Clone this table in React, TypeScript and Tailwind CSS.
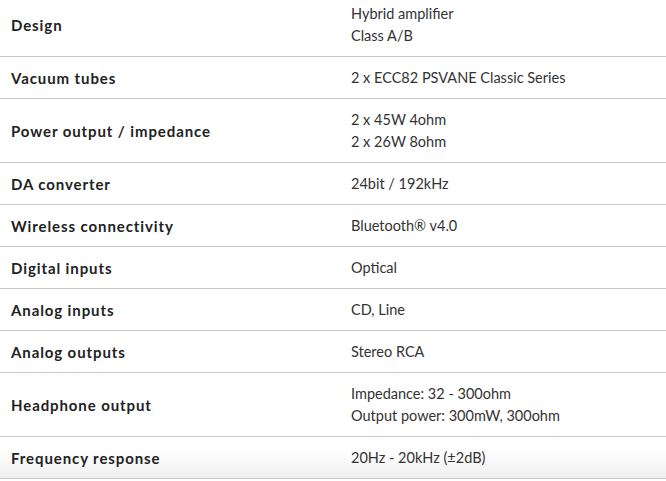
// Spec sheet table: label column on the left, values on the right.

const SPECS: { label: string; values: string[] }[] = [
  { label: "Design", values: ["Hybrid amplifier", "Class A/B"] },
  { label: "Vacuum tubes", values: ["2 x ECC82 PSVANE Classic Series"] },
  { label: "Power output / impedance", values: ["2 x 45W 4ohm", "2 x 26W 8ohm"] },
  { label: "DA converter", values: ["24bit / 192kHz"] },
  { label: "Wireless connectivity", values: ["Bluetooth® v4.0"] },
  { label: "Digital inputs", values: ["Optical"] },
  { label: "Analog inputs", values: ["CD, Line"] },
  { label: "Analog outputs", values: ["Stereo RCA"] },
  {
    label: "Headphone output",
    values: ["Impedance: 32 - 300ohm", "Output power: 300mW, 300ohm"],
  },
  { label: "Frequency response", values: ["20Hz - 20kHz (±2dB)"] },
];

export default function App() {
  return (
    <div className="w-[666px] h-[481px] overflow-hidden bg-white font-['Lato',sans-serif]">
      <div className="-mt-[7px]">
        {SPECS.map((spec, i) => (
          <div
            key={spec.label}
            className={`flex items-center border-b border-[#c6c6c6] py-[9.5px] ${
              i === SPECS.length - 1 ? "bg-gradient-to-b from-white from-30% to-[#f0f0f0]" : ""
            }`}
          >
            <div className="w-[340px] shrink-0 pl-[11px] text-[15px] leading-[22px] font-bold tracking-[0.06em] text-[#222]">
              {spec.label}
            </div>
            <div className="pl-[11px] text-[14.5px] leading-[22px] text-[#333]">
              {spec.values.map((v) => (
                <div key={v}>{v}</div>
              ))}
            </div>
          </div>
        ))}
      </div>
    </div>
  );
}
